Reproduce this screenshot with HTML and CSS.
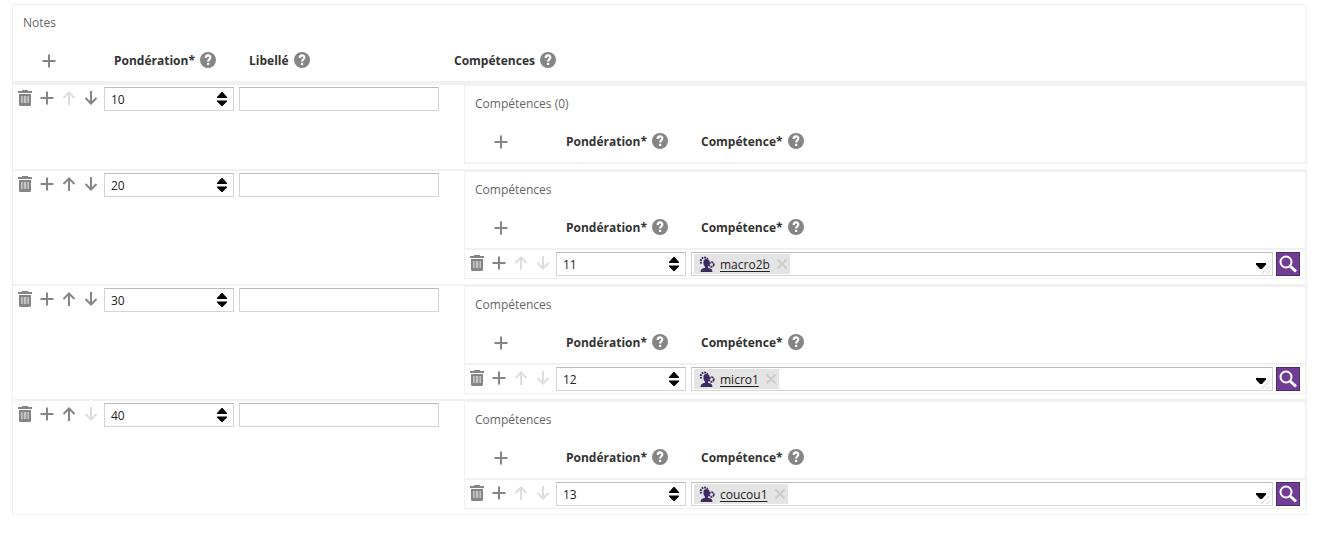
FILE: index.html
```html
<!DOCTYPE html>
<html lang="fr">
<head>
<meta charset="utf-8">
<title>Notes</title>
<link rel="stylesheet" href="styles.css">
</head>
<body>
<svg class="sprite" aria-hidden="true">
  <symbol id="i-trash" viewBox="0 0 16 16"><path d="M5 0h6v1h4v2H1V1h4zM2 4h12v10.500q0 1.500-1.500 1.500h-9Q2 16 2 14.500z"/><path d="M4 6h8v7H4z" fill="#c4c4c4"/><path d="M5.600 6h1.100v7H5.600zM9.300 6h1.100v7H9.300z"/></symbol>
  <symbol id="i-plus" viewBox="0 0 16 16"><path d="M7 1.500h2V7h5.500v2H9v5.500H7V9H1.500V7H7z"/></symbol>
  <symbol id="i-up" viewBox="0 0 16 16"><path d="M8 15V3M2.500 8 8 2.500 13.500 8" fill="none" stroke="currentColor" stroke-width="2"/></symbol>
  <symbol id="i-down" viewBox="0 0 16 16"><path d="M8 1v12M2.500 8 8 13.500 13.500 8" fill="none" stroke="currentColor" stroke-width="2"/></symbol>
  <symbol id="i-help" viewBox="0 0 16 16"><circle cx="8" cy="8" r="8"/><path d="M5.700 6C5.700 2.500 10.300 2.700 10.300 5.600 10.300 7.400 8.100 7.300 8.100 9.500" fill="none" stroke="#fff" stroke-width="2.200"/><path d="M7 10.800h2.200v2.200H7z" fill="#fff"/></symbol>
  <symbol id="i-spin" viewBox="0 0 10 14"><path d="M4.500 0h1L10 5v1H0V5zM0 8.500h10v1L5.500 14h-1L0 9.500z"/></symbol>
  <symbol id="i-skill" viewBox="0 0 16 16"><path d="M4.500 5.500q0-2.500 3-2.500t3 2.500v2.500q-.5 2-1.500 2.700v1l2.500.800q2 .7 2 3.500H1.500q0-2.800 2-3.500l2.500-.8v-1Q4.800 9.800 4.500 8z"/><path d="M2.500 7.500a3.300 3.300 0 1 1 6-4.500" fill="none" stroke="currentColor" stroke-width="2" stroke-dasharray="1.800 .8"/><circle cx="12.500" cy="8.500" r="2.300" fill="none" stroke="currentColor" stroke-width="1.800" stroke-dasharray="1.800 .6"/></symbol>
  <symbol id="i-cross" viewBox="0 0 12 12"><path d="m1.500 1.500 9 9m0-9-9 9" fill="none" stroke="currentColor" stroke-width="2"/></symbol>
  <symbol id="i-caret" viewBox="0 0 14 14"><path d="M0 2h10v1.500L6 8H4L0 3.500z"/><path d="m5.500 13 8-8m-3 8 3-3" fill="none" stroke="#ccc"/></symbol>
  <symbol id="i-search" viewBox="0 0 18 18"><circle cx="7" cy="7" r="5.500" fill="none" stroke="currentColor" stroke-width="2"/><path d="m11 11 6 5.500" fill="none" stroke="currentColor" stroke-width="3"/></symbol>
</svg>
<main class="page" id="page"></main>
<script src="app.js"></script>
</body>
</html>
```

FILE: styles.css
```css
* { box-sizing: border-box; }

body {
  margin: 0;
  background: #fff;
  color: #222;
  font: 12px/16px "Open Sans", "Noto Sans", sans-serif;
}

.sprite { display: none; }
.page { padding: 4px 12px; }

.panel {
  border: 1px solid #f1f1f1;
}
.panel-empty { border-bottom: 0; }
.panel-title {
  margin: 0;
  padding: 10px;
  height: 36px;
  font-size: 12px;
  font-weight: 400;
  color: #666;
}

.grid {
  width: 100%;
  table-layout: fixed;
  border-collapse: separate;
  border-spacing: 0;
}
.col-actions { width: 91px; }
.col-weight { width: 135px; }
.col-label { width: 205px; }

.grid th {
  height: 42px;
  padding: 0 10px;
  border-bottom: 2px solid #f1f1f1;
  text-align: left;
  font-weight: 700;
  color: #333;
}
.grid-main > thead > tr > th {
  height: 44px;
  border-bottom-width: 4px;
}
.grid td { padding: 0; vertical-align: top; }
.grid-main > tbody > tr + tr > td { border-top: 2px solid #f1f1f1; }
.grid td.cell-nested { padding: 0 0 5px 20px; }

.heading { display: flex; align-items: center; gap: 5px; }

.icon { display: block; width: 16px; height: 16px; fill: currentColor; }
.icon-help { margin-bottom: 2px; color: #858585; }

.icon-button {
  display: block;
  padding: 0;
  border: 0;
  background: none;
  color: #858585;
  cursor: pointer;
}
.icon-button:disabled { color: #ddd; cursor: default; }
.add-all { margin-left: 18px; }

.actions { display: flex; gap: 6px; padding: 5px 4px; }

.field { padding: 2px 5px 2px 0; }
.spinner { position: relative; }
.spinner .icon {
  position: absolute;
  top: 5px;
  right: 7px;
  width: 10px;
  height: 14px;
  color: #000;
  pointer-events: none;
}

.input {
  display: block;
  width: 100%;
  height: 24px;
  padding: 1px 6px 0;
  border: 1px solid #d4d4d4;
  border-top-color: #bbb;
  background: #fff;
  color: #222;
  font: inherit;
  appearance: textfield;
}
.input::-webkit-inner-spin-button { appearance: none; margin: 0; }

.lookup { display: flex; gap: 3px; }
.combo {
  display: flex;
  flex: 1;
  align-items: center;
  height: 24px;
  padding: 0 2px;
  border: 1px solid #d4d4d4;
  border-top-color: #bbb;
}
.combo-input {
  flex: 1;
  min-width: 0;
  height: 20px;
  border: 0;
  padding: 0 4px;
  font: inherit;
}
.chip {
  display: flex;
  align-items: center;
  gap: 5px;
  height: 20px;
  padding: 0 2px 0 5px;
  background: #e4e4e4;
  color: #3c2a63;
}
.chip a { padding: 2px 1px 0 0; color: #222; text-underline-offset: 2px; }
.chip .icon-button { color: #ccc; }
.chip .icon-button .icon { width: 12px; height: 12px; }
.caret { align-self: flex-end; }
.caret .icon { width: 14px; height: 14px; color: #000; }

.search {
  display: grid;
  place-items: center;
  width: 24px;
  height: 24px;
  padding: 0;
  border: 1px solid #4b2a70;
  background: #703c94;
  color: #fff;
  cursor: pointer;
}
.search .icon { width: 18px; height: 18px; }
```

FILE: app.js
```js
const icon = (name, cls = '') =>
  `<svg class="icon ${cls}" aria-hidden="true"><use href="#i-${name}"/></svg>`;

const button = (name, label, disabled = false, cls = '') =>
  `<button type="button" class="icon-button ${cls}" aria-label="${label}"${disabled ? ' disabled' : ''}>${icon(name)}</button>`;

const heading = (text) =>
  `<th scope="col"><div class="heading"><span>${text}</span>${icon('help', 'icon-help')}</div></th>`;

const addAll = `<th scope="col">${button('plus', 'Ajouter', false, 'add-all')}</th>`;

const actions = (first, last) =>
  `<td><div class="actions">${button('trash', 'Supprimer')}${button('plus', 'Ajouter')}${button('up', 'Monter', first)}${button('down', 'Descendre', last)}</div></td>`;

const weight = (value) =>
  `<td><div class="field"><div class="spinner"><input class="input" type="number" aria-label="Pondération" value="${value}">${icon('spin')}</div></div></td>`;

const skillRow = ({ value, name }) => `<tr>${actions(true, true)}${weight(value)}
  <td><div class="field lookup">
    <div class="combo">
      <span class="chip">${icon('skill')}<a href="#">${name}</a>${button('cross', 'Retirer')}</span>
      <input class="combo-input" type="text" role="combobox" aria-expanded="false" aria-label="Compétence">
      ${button('caret', 'Ouvrir la liste', false, 'caret')}
    </div>
    <button type="button" class="search" aria-label="Rechercher">${icon('search')}</button>
  </div></td></tr>`;

const skillPanel = (skills) => `<section class="panel ${skills.length ? '' : 'panel-empty'}">
  <h3 class="panel-title">Compétences${skills.length ? '' : ' (0)'}</h3>
  <table class="grid">
    <colgroup><col class="col-actions"><col class="col-weight"><col></colgroup>
    <thead><tr>${addAll}${heading('Pondération*')}${heading('Compétence*')}</tr></thead>
    <tbody>${skills.map(skillRow).join('')}</tbody>
  </table></section>`;

const notes = [
  { value: 10, skills: [] },
  { value: 20, skills: [{ value: 11, name: 'macro2b' }] },
  { value: 30, skills: [{ value: 12, name: 'micro1' }] },
  { value: 40, skills: [{ value: 13, name: 'coucou1' }] },
];

const noteRow = (note, i) => `<tr>${actions(i === 0, i === notes.length - 1)}${weight(note.value)}
  <td><div class="field"><input class="input" type="text" aria-label="Libellé"></div></td>
  <td class="cell-nested">${skillPanel(note.skills)}</td></tr>`;

document.getElementById('page').innerHTML = `<section class="panel">
  <h2 class="panel-title">Notes</h2>
  <table class="grid grid-main">
    <colgroup><col class="col-actions"><col class="col-weight"><col class="col-label"><col></colgroup>
    <thead><tr>${addAll}${heading('Pondération*')}${heading('Libellé')}${heading('Compétences')}</tr></thead>
    <tbody>${notes.map(noteRow).join('')}</tbody>
  </table></section>`;
```
